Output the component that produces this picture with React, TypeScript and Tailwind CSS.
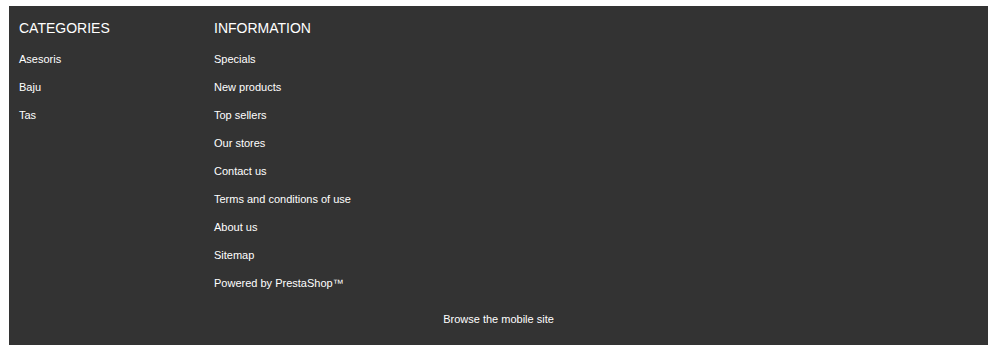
import React from "react";

const categories = ["Asesoris", "Baju", "Tas"];
const info = [
  "Specials",
  "New products",
  "Top sellers",
  "Our stores",
  "Contact us",
  "Terms and conditions of use",
  "About us",
  "Sitemap",
  "Powered by PrestaShop™",
];

export default function App() {
  return (
    <div className="w-[1001px] h-[345px] bg-white overflow-hidden pt-[6px] pl-[9px]" style={{ fontFamily: '"Liberation Sans", Arial, sans-serif' }}>
      <div className="w-[979px] h-[360px] bg-[#333333] text-white pt-[13px] px-[10px]">
        <div className="flex">
          <div className="w-[195px]">
            <h4 className="text-[14px] leading-[18px] h-[18px] uppercase font-normal">Categories</h4>
            <ul className="mt-[8px]">
              {categories.map((c) => (
                <li key={c} className="text-[11px] leading-[28px] h-[28px]">{c}</li>
              ))}
            </ul>
          </div>
          <div className="w-[300px]">
            <h4 className="text-[14px] leading-[18px] h-[18px] uppercase font-normal">Information</h4>
            <ul className="mt-[8px]">
              {info.map((c) => (
                <li key={c} className="text-[11px] leading-[28px] h-[28px]">{c}</li>
              ))}
            </ul>
          </div>
        </div>
        <div className="mt-[8px] text-center text-[11px] leading-[28px] h-[28px]">Browse the mobile site</div>
      </div>
    </div>
  );
}
